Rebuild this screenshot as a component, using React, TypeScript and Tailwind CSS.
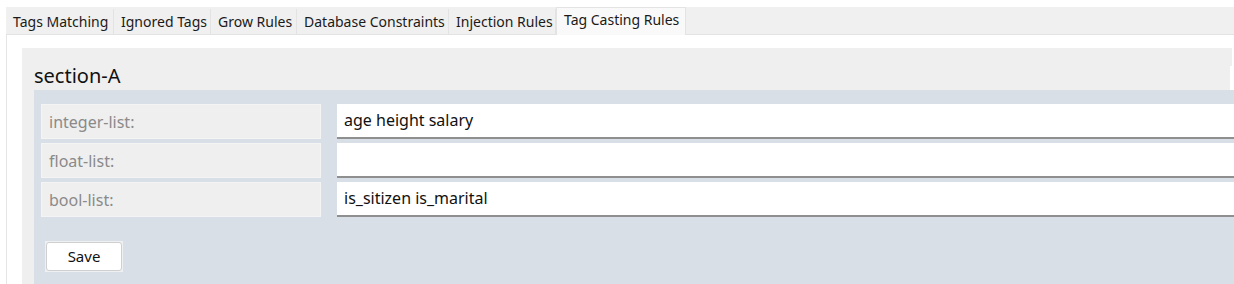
const tabs = [
  { label: 'Tags Matching', w: 'w-[108px]' },
  { label: 'Ignored Tags', w: 'w-[97px]' },
  { label: 'Grow Rules', w: 'w-[86px]' },
  { label: 'Database Constraints', w: 'w-[152px]' },
  { label: 'Injection Rules', w: 'w-[107px]' },
];

const rows = [
  { label: 'integer-list:', value: 'age height salary' },
  { label: 'float-list:', value: '' },
  { label: 'bool-list:', value: 'is_sitizen is_marital' },
];

export default function App() {
  return (
    <div className="w-[1234px] h-[284px] overflow-hidden bg-white pt-[7px] font-['Noto_Sans','Open_Sans',sans-serif] text-black">
      {/* Tab strip */}
      <div className="ml-[6px] flex items-end h-[28px] bg-[#f0f0f0] border-b border-[#e3e3e3]">
        {tabs.map((t) => (
          <div
            key={t.label}
            className={`${t.w} h-[25px] flex items-center pl-[7px] text-[14px] leading-none text-[#1a1a1a] border-r border-[#e3e3e3] whitespace-nowrap`}
          >
            {t.label}
          </div>
        ))}
        <div className="w-[130px] h-[28px] -mb-px flex items-start pt-[5px] pl-[7px] text-[14px] leading-none text-[#1a1a1a] bg-[#f9f9f9] border border-b-0 border-[#e3e3e3] whitespace-nowrap">
          Tag Casting Rules
        </div>
      </div>

      {/* Content */}
      <div className="ml-[6px] h-[260px] border-l border-[#e6e6e6] pl-[15px] pt-[13px]">
        <div className="relative h-full w-[1210px] bg-[#efefef] pl-[12px] pt-[14px]">
          <div className="absolute right-0 top-[18px] w-[2px] h-[24px] bg-white" />
          <h2 className="h-[28px] text-[20px] leading-[28px] text-[#111]">section-A</h2>
          <div className="relative h-full w-[1210px] bg-[#d8dfe6] pl-[7px] pt-[14px]">
            <div className="flex flex-col gap-[4px]">
              {rows.map((r) => (
                <div key={r.label} className="flex items-stretch h-[35px] gap-[16px]">
                  <div className="w-[280px] flex items-center pl-[7px] bg-[#efefef] border border-[#f4f4f4] text-[16px] text-[#8a8a8a]">
                    {r.label}
                  </div>
                  <div className="flex-1 flex items-center pl-[7px] pb-[2px] bg-white border-b-2 border-[#8f8f8f] text-[16px] text-[#111]">
                    {r.value}
                  </div>
                </div>
              ))}
            </div>
            <div className="mt-[24px] ml-[4px] inline-flex p-px bg-[#eef0f2]">
              <button className="w-[76px] h-[29px] bg-white border border-[#cfcfcf] rounded-[3px] text-[15px] text-[#111]">
                Save
              </button>
            </div>
          </div>
        </div>
      </div>
    </div>
  );
}
